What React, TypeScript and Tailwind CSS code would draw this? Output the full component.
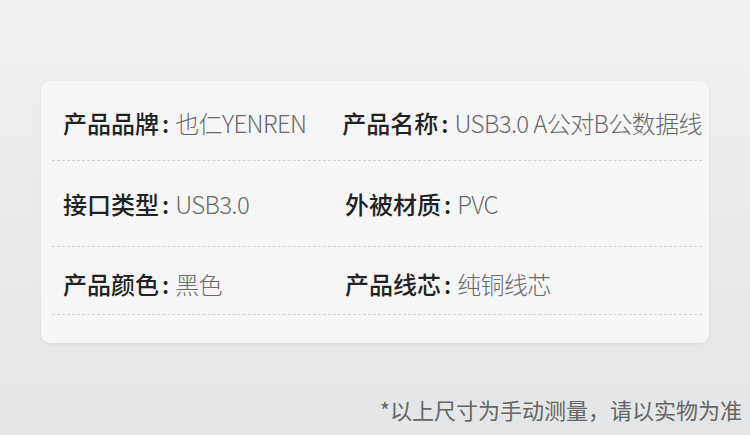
import React from 'react'

interface SpecItem {
  label: string
  value: string
}

const rows: { items: SpecItem[]; height: string; pad: string }[] = [
  {
    items: [
      { label: '产品品牌', value: '也仁YENREN' },
      { label: '产品名称', value: 'USB3.0 A公对B公数据线' },
    ],
    height: 'h-[80px]',
    pad: 'pt-[26px]',
  },
  {
    items: [
      { label: '接口类型', value: 'USB3.0' },
      { label: '外被材质', value: 'PVC' },
    ],
    height: 'h-[86px]',
    pad: 'pt-[27px]',
  },
  {
    items: [
      { label: '产品颜色', value: '黑色' },
      { label: '产品线芯', value: '纯铜线芯' },
    ],
    height: 'h-[68px]',
    pad: 'pt-[21px]',
  },
]

const SpecCell: React.FC<{ item: SpecItem; className?: string }> = ({ item, className = '' }) => (
  <div className={`flex items-center whitespace-nowrap h-[32px] leading-[32px] ${className}`}>
    <span className="text-[24px] font-medium text-[#222222]">{item.label}</span>
    <span className="text-[24px] font-medium text-[#222222] ml-[3px] mr-[6px]">:</span>
    <span className="text-[24px] font-light text-[#6a6a6a] tracking-[-0.6px]">{item.value}</span>
  </div>
)

export default function App() {
  return (
    <div
      className="w-[750px] h-[435px] overflow-hidden bg-gradient-to-b from-[#f0f0f1] to-[#e4e5e6] flex flex-col"
      style={{ fontFamily: '"Noto Sans CJK SC", "Noto Sans", sans-serif' }}
    >
      <div className="mt-[81px] ml-[41px] w-[668px] h-[262px] rounded-[9px] bg-[#f6f6f7] shadow-[0_1px_3px_rgba(0,0,0,0.06)] pl-[11px] pr-[7px]">
        {rows.map((row, i) => (
          <div
            key={i}
            className={`${row.height} ${row.pad} flex items-start border-b border-dashed border-[#d2d2d4]`}
          >
            <SpecCell item={row.items[0]} className="w-[293px] pl-[11px]" />
            <SpecCell item={row.items[1]} />
          </div>
        ))}
      </div>

      {/* Footnote */}
      <div className="mt-[51px] pr-[8px] flex justify-end">
        <p className="text-[22px] leading-[30px] text-[#666666] whitespace-nowrap">
          *以上尺寸为手动测量，请以实物为准
        </p>
      </div>
    </div>
  )
}
